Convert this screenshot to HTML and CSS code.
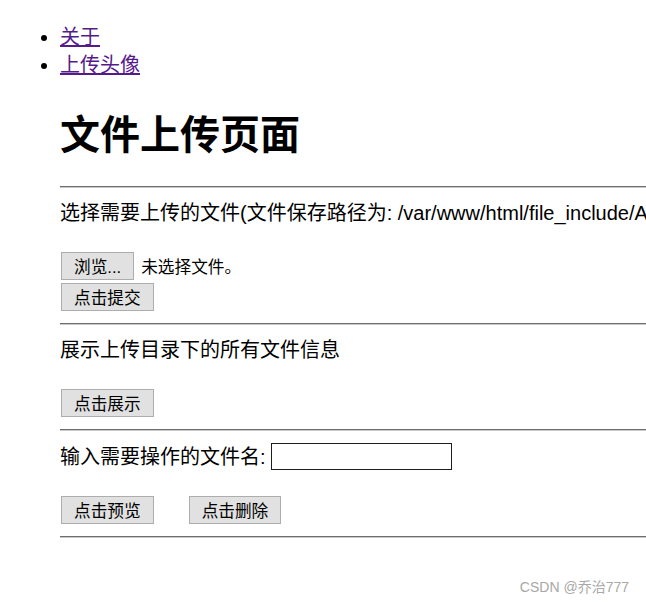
FILE: index.html
```html
<!DOCTYPE html>
<html lang="zh-CN">
<head>
  <meta charset="UTF-8">
  <meta name="viewport" content="width=device-width, initial-scale=1.0">
  <title>文件上传页面</title>
  <link rel="stylesheet" href="styles.css">
</head>
<body>
  <ul class="nav">
    <li><a href="#about">关于</a></li>
    <li><a href="#avatar">上传头像</a></li>
  </ul>

  <div class="main">
    <h1>文件上传页面</h1>
    <hr>
    <div class="block">
      <div class="label">选择需要上传的文件(文件保存路径为: /var/www/html/file_include/AAA/upload/)</div>
      <div class="actions col">
        <div class="file">
          <button class="btn" type="button">浏览...</button>
          <span class="file-name">未选择文件。</span>
        </div>
        <div><button class="btn" type="submit">点击提交</button></div>
      </div>
    </div>
    <hr>
    <div class="block">
      <div class="label">展示上传目录下的所有文件信息</div>
      <div class="actions">
        <button class="btn" type="button">点击展示</button>
      </div>
    </div>
    <hr>
    <div class="block">
      <div class="label row">输入需要操作的文件名: <input class="text-input" type="text"></div>
      <div class="actions row wide">
        <button class="btn" type="button">点击预览</button>
        <button class="btn" type="button">点击删除</button>
      </div>
    </div>
    <hr>
  </div>

  <div class="watermark">CSDN @乔治777</div>
</body>
</html>
```

FILE: styles.css
```css
html, body{
  margin: 0;
  overflow: hidden;
  background: #fff;
}

body{
  position: relative;
  height: 603px;
  font-family: "Liberation Sans", "Noto Sans CJK SC", sans-serif;
  font-size: 20px;
  color: #000;
}

.nav{
  margin: 0;
  padding: 23px 0 0 60px;
  line-height: 28px;
}

.nav a{
  color: #551a8b;
}

.main{
  padding-left: 60px;
  overflow: hidden;
}

.main h1{
  margin: 30px 0 25px;
  font-size: 40px;
  line-height: 52px;
  font-weight: bold;
}

.main hr{
  margin: 0;
  height: 0;
  border: 0;
  border-top: 1px solid #6e6e6e;
  border-bottom: 1px solid #c9c9c9;
}

.block{
  padding: 11px 0 12px;
}

.label{
  line-height: 28px;
  white-space: nowrap;
}

.row{
  display: flex;
  align-items: center;
}

.label.row{
  height: 29px;
  gap: 5px;
}

.actions{
  margin-top: 25px;
  padding-left: 1px;
}

.actions.col{
  display: flex;
  flex-direction: column;
  gap: 3px;
}

.actions.wide{
  gap: 35px;
}

.file{
  display: flex;
  align-items: center;
  gap: 7px;
}

.file-name{
  font-size: 16.67px;
}

.btn{
  height: 28px;
  margin: 0;
  padding: 0 12px;
  font-family: inherit;
  font-size: 16.67px;
  color: #000;
  background: #e1e1e1;
  border: 1px solid #adadad;
  border-radius: 0;
}

.text-input{
  width: 181px;
  height: 27px;
  margin: 0;
  padding: 0 3px;
  box-sizing: border-box;
  border: 1px solid #1e1e1e;
  border-radius: 0;
  font-family: inherit;
  font-size: 16px;
}

.watermark{
  position: absolute;
  right: 17px;
  top: 579px;
  font-size: 14px;
  line-height: 16px;
  color: #a8a8a8;
}
```
